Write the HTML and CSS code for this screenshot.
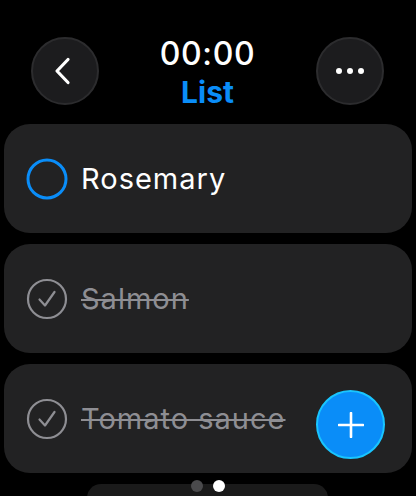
FILE: index.html
```html
<!DOCTYPE html>
<html lang="en">
<head>
  <meta charset="UTF-8">
  <title>List</title>
  <link rel="stylesheet" href="styles.css">
</head>
<body>
  <div class="screen">
    <div class="top-bar">
      <button class="round-btn">
        <svg width="24" height="30" viewBox="0 0 24 30"><path d="M15 3.5 L4 15 L15 26.5" fill="none" stroke="#fff" stroke-width="3.2" stroke-linecap="round" stroke-linejoin="round"/></svg>
      </button>
      <div class="title">
        <div class="time">00:00</div>
        <div class="name">List</div>
      </div>
      <button class="round-btn">
        <svg width="30" height="8" viewBox="0 0 30 8"><circle cx="4" cy="4" r="3" fill="#fff"/><circle cx="15" cy="4" r="3" fill="#fff"/><circle cx="26" cy="4" r="3" fill="#fff"/></svg>
      </button>
    </div>

    <div class="list">
      <div class="item">
        <svg class="check" width="42" height="42" viewBox="0 0 42 42"><circle cx="21" cy="21" r="19" fill="none" stroke="#0a8df8" stroke-width="3"/></svg>
        <span class="label">Rosemary</span>
      </div>
      <div class="item done">
        <svg class="check" width="42" height="42" viewBox="0 0 42 42"><circle cx="21" cy="21" r="19" fill="none" stroke="#8e8e93" stroke-width="2.2"/><path d="M13.5 21.5 L19 27.5 L28.5 14" fill="none" stroke="#8e8e93" stroke-width="2.2" stroke-linecap="round" stroke-linejoin="round"/></svg>
        <span class="label">Salmon</span>
      </div>
      <div class="item done">
        <svg class="check" width="42" height="42" viewBox="0 0 42 42"><circle cx="21" cy="21" r="19" fill="none" stroke="#8e8e93" stroke-width="2.2"/><path d="M13.5 21.5 L19 27.5 L28.5 14" fill="none" stroke="#8e8e93" stroke-width="2.2" stroke-linecap="round" stroke-linejoin="round"/></svg>
        <span class="label">Tomato sauce</span>
      </div>
    </div>

    <button class="add-btn">
      <svg width="26" height="26" viewBox="0 0 26 26"><path d="M13 1 V25 M1 13 H25" stroke="#fff" stroke-width="2.6" stroke-linecap="round"/></svg>
    </button>

    <div class="pager">
      <span class="dot"></span>
      <span class="dot active"></span>
    </div>
    <div class="bottom-pill"></div>
  </div>
</body>
</html>
```

FILE: styles.css
```css
body {
  margin: 0;
  background: #000;
  font-family: 'Inter', 'Roboto', sans-serif;
  color: #fff;
}
.screen {
  position: relative;
  width: 416px;
  height: 496px;
  overflow: hidden;
}
.top-bar {
  display: flex;
  align-items: flex-start;
  justify-content: space-between;
  padding: 37px 32px 0 31px;
  height: 87px;
}
.round-btn {
  width: 68px;
  height: 68px;
  border-radius: 50%;
  background: #1c1c1e;
  border: 2px solid #2c2c2e;
  display: flex;
  align-items: center;
  justify-content: center;
  padding: 0;
}
.title {
  text-align: center;
  margin-top: -2px;
}
.time {
  font-size: 32px;
  font-weight: 500;
  line-height: 38px;
  letter-spacing: 0.6px;
}
.name {
  font-size: 30px;
  font-weight: 700;
  line-height: 38px;
  color: #0a8df8;
}
.list {
  display: flex;
  flex-direction: column;
  gap: 11px;
  padding: 0 4px;
}
.item {
  height: 109px;
  background: #222223;
  border-radius: 26px;
  display: flex;
  align-items: center;
  padding-left: 22px;
  gap: 13px;
}
.check {
  flex-shrink: 0;
}
.label {
  font-size: 29px;
  letter-spacing: 1px;
  line-height: 1;
}
.done .label {
  color: #8e8e93;
  text-decoration: line-through;
  text-decoration-thickness: 2px;
}
.add-btn {
  position: absolute;
  left: 316px;
  top: 390px;
  width: 69px;
  height: 69px;
  border-radius: 50%;
  background: #0a8df8;
  border: 2px solid #19c5ff;
  display: flex;
  align-items: center;
  justify-content: center;
  padding: 0;
}
.pager {
  position: absolute;
  left: 0;
  right: 0;
  top: 480px;
  display: flex;
  justify-content: center;
  gap: 10px;
  z-index: 2;
}
.dot {
  width: 12px;
  height: 12px;
  border-radius: 50%;
  background: #4a4a4c;
}
.dot.active {
  background: #fff;
}
.bottom-pill {
  position: absolute;
  left: 87px;
  top: 484px;
  width: 241px;
  height: 40px;
  border-radius: 14px;
  background: #1a1a1a;
}
```
